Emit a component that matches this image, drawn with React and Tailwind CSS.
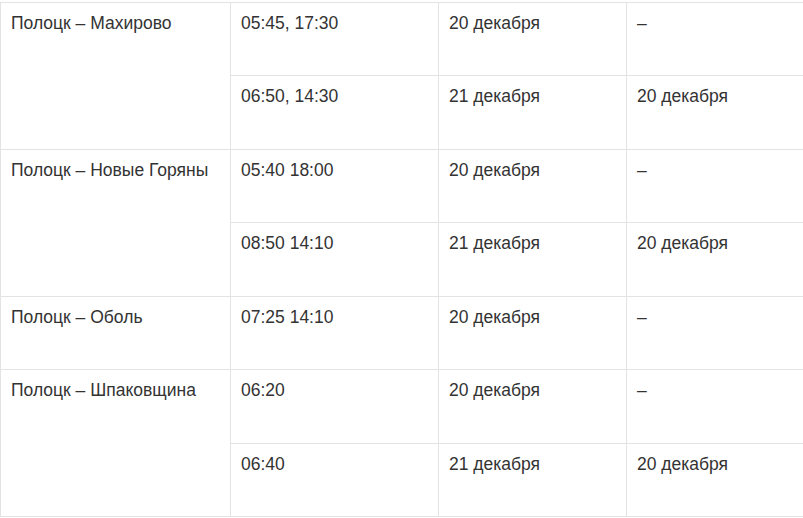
import React from "react";

const groups = [
  { name: "Полоцк – Махирово", rows: [["05:45, 17:30", "20 декабря", "–"], ["06:50, 14:30", "21 декабря", "20 декабря"]] },
  { name: "Полоцк – Новые Горяны", rows: [["05:40 18:00", "20 декабря", "–"], ["08:50 14:10", "21 декабря", "20 декабря"]] },
  { name: "Полоцк – Оболь", rows: [["07:25 14:10", "20 декабря", "–"]] },
  { name: "Полоцк – Шпаковщина", rows: [["06:20", "20 декабря", "–"], ["06:40", "21 декабря", "20 декабря"]] },
];

const heights = ["h-[73px]", "h-[74px]", "h-[73px]", "h-[74px]", "h-[73px]", "h-[74px]", "h-[73px]"];

export default function App() {
  let idx = 0;
  const cell = "border border-[#e3e3e3] align-top px-[10px] pt-[8px] pb-0 leading-[24px]";
  return (
    <div className="w-[803px] h-[518px] bg-white pt-[2px] overflow-hidden" style={{ fontFamily: '"Liberation Sans", Arial, sans-serif' }}>
      <table className="w-[803px] border-collapse table-fixed text-[17.5px] text-[#333333]">
        <colgroup>
          <col className="w-[230px]" />
          <col className="w-[208px]" />
          <col className="w-[188px]" />
          <col className="w-[177px]" />
        </colgroup>
        <tbody>
          {groups.map((g) =>
            g.rows.map((r, i) => {
              const h = heights[idx++];
              return (
                <tr key={g.name + i} className={h}>
                  {i === 0 && (
                    <td rowSpan={g.rows.length} className={cell}>
                      {g.name}
                    </td>
                  )}
                  <td className={cell}>{r[0]}</td>
                  <td className={cell}>{r[1]}</td>
                  <td className={cell}>{r[2]}</td>
                </tr>
              );
            })
          )}
        </tbody>
      </table>
    </div>
  );
}
